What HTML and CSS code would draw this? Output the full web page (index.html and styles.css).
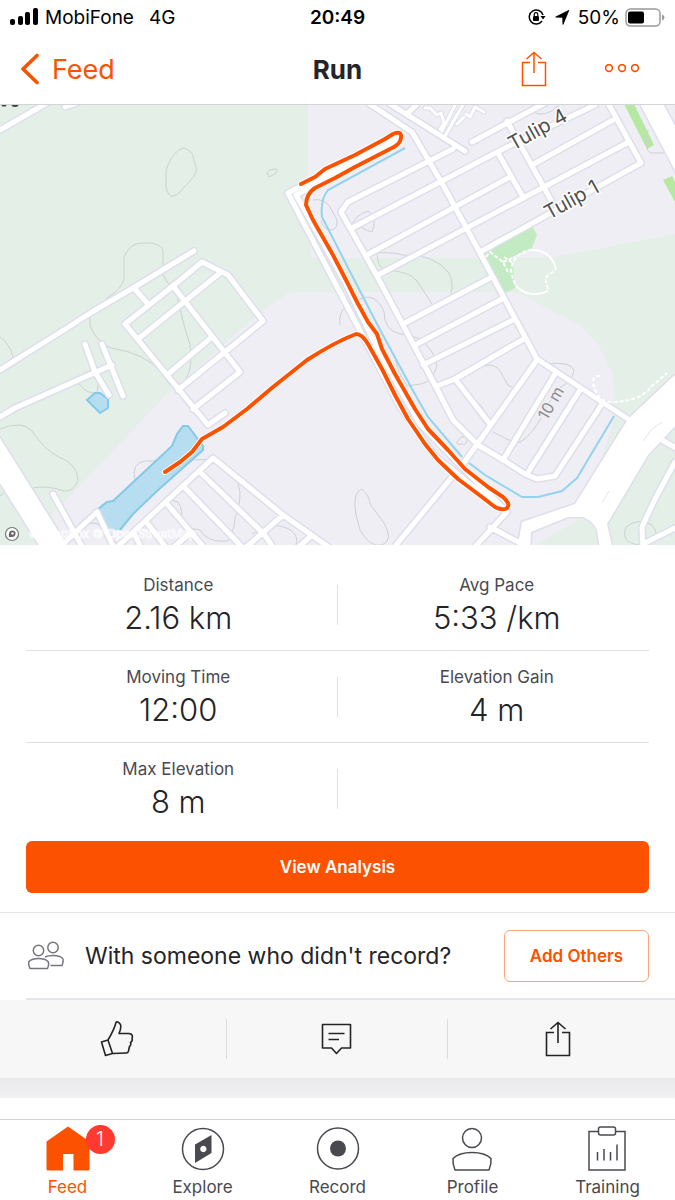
FILE: index.html
```html
<!DOCTYPE html>
<html lang="en">
  <head>
    <meta charset="UTF-8" />
    <meta name="viewport" content="width=device-width, initial-scale=1" />
    <title>Run</title>
    <link rel="stylesheet" href="styles.css">
  </head>
  <body>
    <!-- Phone status bar -->
    <div class="status-bar">
      <div class="status-left">
        <svg width="28" height="18" viewBox="0 0 28 18">
          <rect x="0" y="11" width="5" height="6" rx="2" />
          <rect x="8" y="8" width="5" height="9" rx="2" />
          <rect x="15" y="4" width="5" height="13" rx="2" />
          <rect x="23" y="0" width="5" height="17" rx="2" />
        </svg>
        <span>MobiFone</span>
        <span class="network">4G</span>
      </div>
      <div class="status-time">20:49</div>
      <div class="status-right">
        <svg width="18" height="16" viewBox="0 0 18 16">
          <path d="M14 12A7 7 0 1 1 15 6" fill="none" stroke="#000" stroke-width="1.500" />
          <path d="M12.500 7h5l-2.500 3.500z" />
          <rect x="5" y="7" width="6" height="5" rx="1" />
          <path d="M6.200 7V5.500a1.800 1.800 0 0 1 3.600 0V7" fill="none" stroke="#000" stroke-width="1.200" />
        </svg>
        <svg class="location" width="15" height="15" viewBox="0 0 15 15">
          <path d="M14.200.4 8.500 14.300q-.6 1-1 0L7.300 7.800.8 7.600q-1-.4 0-1L13.800 0q.6-.1.400.4z" />
        </svg>
        <span>50%</span>
        <svg width="40" height="19" viewBox="0 0 40 19">
          <rect x="1" y="1" width="34" height="17" rx="4.500" fill="none" stroke="#999" stroke-width="1.500" />
          <rect x="3" y="3.500" width="16" height="12" rx="2" />
          <path d="M37 6.500q2.500 1 2.500 3t-2.500 3z" fill="#999" />
        </svg>
      </div>
    </div>

    <header class="nav-bar">
      <a class="back" href="#feed">
        <svg width="20" height="32" viewBox="0 0 20 32">
          <path d="M17 2.500 3 16l14 13.500" fill="none" stroke="currentColor" stroke-width="3.600" stroke-linecap="round" stroke-linejoin="round" />
        </svg>
        Feed
      </a>
      <h1>Run</h1>
      <div class="nav-actions">
        <button class="icon-button" type="button" aria-label="Share">
          <svg width="26" height="36" viewBox="0 0 26 36">
            <path d="M9 11.500H1.500V34.500h23V11.500H17M13 22V1.500M5.500 8 13 1.500l7.500 6.500" fill="none" stroke="currentColor" stroke-width="1.500" />
          </svg>
        </button>
        <button class="icon-button" type="button" aria-label="More">
          <svg width="36" height="10" viewBox="0 0 36 10">
            <g fill="none" stroke="currentColor" stroke-width="1.600">
              <circle cx="5" cy="4" r="3.400" />
              <circle cx="18" cy="4" r="3.400" />
              <circle cx="31" cy="4" r="3.400" />
            </g>
          </svg>
        </button>
      </div>
    </header>

    <main>
      <div class="map">
        <svg class="map-canvas" viewBox="0 105 675 440" role="img" aria-label="Route map">
          <rect class="land" x="0" y="104" width="675" height="442" />

          <!-- Green areas -->
          <path class="green" d="M0 104H308V193L311 258H480L555 257 675 234V545H598L583 519 575 521 535 545 614 422 613 375 598 344 580 325 517 292H290L262 311 167 394 52 515 67 545H0z" />
          <path class="land" d="M614 422 613 375 540 360 480 500 517 545H535L580 519z" />
          <path class="green" d="M535 545 580 519 598 530V545z" />
          <path class="park" d="M533 227 537 235 532 248 512 257 515 288 503 294 482 253z" />
          <path class="grass" d="M624 104h10l20 41-7 4zM663 180l9-4 3 6v20z" />

          <!-- Contour lines -->
          <g class="contour">
            <path d="M184 148q-7 1-13 11t-5 17v11q2 10 7 9t7-4 10-11 6-14-3-11-9-8z" />
            <path d="M267 173q2-4 7-4 4 0 3 2l-2 3-6 3z" />
            <path d="M106 299Q124 287 124 278V257Q130 242 145 243H152Q163 246 163 251V275Q168 285 176 292L184 325 190 345Q193 366 187 377T176 382" />
            <path d="M90 312V326Q98 344 111 348 145 353 161 372L170 385" />
            <path d="M0 337Q10 344 13 357M0 429Q22 420 32 431 45 450 57 456 78 464 78 480 74 492 64 491 48 485 32 488M0 496 5 492" />
            <path d="M97 371Q80 370 78 382 84 393 95 393M99 378 97 393" />
            <path d="M135 480Q131 463 145 461H176L213 459Q238 471 240 492 240 508 235 517 235 530 228 541 207 543 200 530 187 528 180 525M135 480 141 497 125 520M159 512Q165 496 178 502 184 510 181 524" />
            <path d="M313 200Q324 198 330 207L337 220Q338 230 330 230 322 228 321 220" />
            <path d="M352 226Q354 216 368 211 378 218 372 232 365 230 361 227 354 232 352 226" />
            <path d="M377 253Q396 252 402 255 433 253 449 273 454 284 451 294M377 253Q377 268 387 270 411 272 417 281L432 304" />
            <path d="M340 325Q337 306 360 299 376 292 384 312 384 330 400 334L418 338Q435 350 437 366 432 382 421 384L407 386Q398 372 395 360" />
            <path d="M484 366Q495 363 500 371L508 385 513 388M547 364Q570 361 574 370 573 380 560 388L546 407 540 420Q525 444 515 443 505 438 493 432M474 402Q484 403 485 417M457 442q5-9 10-3 0 7-6 5-5 1-4-2" />
            <path d="M531 111Q545 120 560 104M648 130Q643 150 651 153H665M640 545Q620 543 626 527 638 517 652 525 660 535 653 540" />
            <path d="M362 489Q370 497 370 504L384 523Q394 540 382 545 370 548 360 530L356 515Q352 492 362 489M252 534Q267 525 279 526 300 530 296 545" />
            <path d="M86 526Q94 520 100 526" />
          </g>

          <!-- Water -->
          <path class="water" d="M95 393h5l8 6v9l-8 5-13-13z" />
          <path class="water-fill" d="M98 509 107 502 113 501 172 446 177 434 183 426H188L203 446V450L157 491 133 514 120 530 108 531z" />
          <path class="shore" d="M98 509 107 502 113 501 172 446 177 434 183 426H188L203 446V450L157 491 133 514 120 530" />

          <!-- Streets: one set drawn twice for the casing and the fill -->
          <defs>
            <g id="streets">
              <path d="M0 130 47 103M65 107 77 103" />
              <path d="M194 251 133 288 92 312 67 328 0 370M135 289 147 303" />
              <path d="M138 339 220 273M125 324 173 286 202 262 228 275 263 321 225 352 178 390M173 286 240 372 193 409" />
              <path d="M125 324 167 375 208 425 225 413M167 375 212 337" />
              <path d="M0 417 15 408 112 365M85 344 95 372 109 395M102 344 123 396" />
              <path d="M53 494 84 550M62 545 97 512 115 550" />
              <path d="M115 549 213 458 283 515 330 548M200 472 264 534 275 550M185 488 245 550M168 505 206 550M148 524 168 550M135 535 142 550M243 550 283 515M310 537 295 550M188 535 170 550" />
              <path d="M368 103 412 132 443 185 480 253 517 322 537 359 628 419" />
              <path d="M390 104 465 151M418 103 408 113M472 142 545 103M507 121 552 202" />
              <path d="M453 149 348 202 341 212 377 276 403 325 437 389 453 420 478 445 505 461 525 474 537 479 555 476 602 404" />
              <path d="M352 228 505 148 595 105M367 255 510 177M498 153 523 197M378 275 627 143M532 165 613 120M608 103 641 163 480 252" />
              <path d="M403 324 490 278M415 345 502 299M423 365 513 320M437 386 455 379 522 340M455 379 490 424" />
              <path d="M537 360 463 464M452 477 392 550M555 374 503 460M580 390 527 474" />
              <path d="M400 134 288 193 357 325 400 407 435 456 505 512M400 139 296 195 345 282 377 348 420 424 455 460 507 512 472 550M490 527 522 544" />
              <path d="M675 462 655 499 642 527 643 550M645 543 675 528M660 439 676 448" />
            </g>
            <g id="highways">
              <path d="M-5 430 70 550H42L-5 475z" />
              <path d="M638 100 680 180V135L661 100z" />
              <path d="M680 370 628 419 575 504 522 522 517 550H530L531 532 568 517H583Q594 522 597 530L600 550H613L607 524 648 455 680 421z" />
            </g>
            <g id="lanes">
              <path d="M464 103 445 136M456 103 442 131M425 108 430 108 437 115 441 113 444 123 440 129M464 117 457 124M466 114 470 117 475 107 484 112" />
            </g>
          </defs>
          <use class="casing" href="#streets" />
          <use class="highway-casing" href="#highways" />
          <use class="lane-casing" href="#lanes" />
          <use class="fill" href="#streets" />
          <use class="highway-fill" href="#highways" />
          <use class="lane-fill" href="#lanes" />
          <path class="ramp" d="M643 441 652 429 662 422M602 503 609 491" />

          <!-- Footpaths -->
          <path class="footpath" d="M532 250Q514 252 511 270 513 282 517 287M548 289 545 278 556 269M486 257 490 252 503 262 509 274M503 262 515 257M504 257 513 263" />
          <path class="footpath-solid" d="M517 287Q530 299 548 291M532 250Q551 250 556 269" />
          <path class="footpath" d="M600 376Q590 375 595 390 600 402 614 402 640 401 652 386L667 373" />

          <!-- Canals -->
          <path class="canal" d="M405 148 328 190Q320 200 322 217L377 324 412 389 428 417 462 457M469 463 485 475 522 497H538L562 491 577 478 614 416" />

          <!-- Recorded route -->
          <g id="route">
            <path class="route-casing" d="M301 184 315 177 325 169 355 155 385 139 393 134Q402 130 401 138 400 145 390 149L355 167 335 178 315 188Q306 194 306 205L313 220 333 255 347 282 357 302 368 322 377 334 382 349 395 374 415 409 428 429 448 450 465 469 488 487 503 497Q511 504 507 508 503 511 495 507L478 494 458 479 438 460 425 444 408 419 395 395 382 369 368 344Q362 334 356 334 335 342 307 360L273 387 247 409 223 427 202 439 192 452 180 462 165 472" />
            <path class="route-line" d="M301 184 315 177 325 169 355 155 385 139 393 134Q402 130 401 138 400 145 390 149L355 167 335 178 315 188Q306 194 306 205L313 220 333 255 347 282 357 302 368 322 377 334 382 349 395 374 415 409 428 429 448 450 465 469 488 487 503 497Q511 504 507 508 503 511 495 507L478 494 458 479 438 460 425 444 408 419 395 395 382 369 368 344Q362 334 356 334 335 342 307 360L273 387 247 409 223 427 202 439 192 452 180 462 165 472" />
          </g>

          <!-- Labels -->
          <text class="street-name" transform="translate(513 151) rotate(-29)">Tulip 4</text>
          <text class="street-name" transform="translate(549 220) rotate(-29)">Tulip 1</text>
          <text class="height-label" transform="translate(547 421) rotate(-60)">10 m</text>
          <path class="clipped-label" d="M2 105q2 1 4 0M12 105q3 2 6 0" />
          <text class="attribution" x="29" y="538">© Mapbox © OpenStreetMap</text>
          <circle cx="12" cy="534" r="6.500" fill="#fff" stroke="#777" stroke-width="1.200" />
          <path d="M9 537q-1-6 3-6.500 4 0 3.500 3.500-.5 3-3.500 3z" fill="#666" />
          <circle cx="12.500" cy="533.500" r="1.200" fill="#fff" />
        </svg>
      </div>

      <section class="summary">
        <dl class="stats">
          <div class="stat">
            <dt>Distance</dt>
            <dd>2.16 km</dd>
          </div>
          <div class="stat">
            <dt>Avg Pace</dt>
            <dd>5:33 /km</dd>
          </div>
          <div class="stat">
            <dt>Moving Time</dt>
            <dd>12:00</dd>
          </div>
          <div class="stat">
            <dt>Elevation Gain</dt>
            <dd>4 m</dd>
          </div>
          <div class="stat">
            <dt>Max Elevation</dt>
            <dd>8 m</dd>
          </div>
        </dl>
        <button class="analysis" type="button">View Analysis</button>
      </section>

      <section class="others">
        <svg width="36" height="30" viewBox="0 0 36 30">
          <g fill="none" stroke="#76747f" stroke-width="1.500">
            <circle cx="10.500" cy="9.500" r="5.200" />
            <circle cx="25" cy="6.500" r="5.200" />
            <path d="M2 27.500Q0 23 1 20.500 4 17.500 10.500 17.500T20 20.500Q21.500 23 19.500 27.500z" />
            <path d="M17 16Q20 14.500 25 14.500 33 14.500 35 18 35.500 21 34 24.500H22.500" />
          </g>
        </svg>
        <p>With someone who didn't record?</p>
        <button class="add-others" type="button">Add Others</button>
      </section>

      <div class="actions">
        <button class="icon-button" type="button" aria-label="Give kudos">
          <svg width="34" height="36" viewBox="0 0 34 36">
            <path d="M1.500 21 8 19 12.500 32.500 5.500 34.500zM8 19Q14 9 16 1.500 17.500-.5 20.500 3.500 21.500 7 19 12.500H29Q33.500 13 32 17.500 33 20 30.500 21.500 31.500 24 29.500 25.500L28.500 30Q28 32 26.500 32L12.500 32.500" fill="none" stroke="currentColor" stroke-width="1.600" stroke-linejoin="round" />
          </svg>
        </button>
        <button class="icon-button" type="button" aria-label="Comment">
          <svg width="31" height="32" viewBox="0 0 31 32">
            <path d="M2 1.500H29.500V25H20.500L15.500 30.500 10.500 25H1.500V1.500zM7.500 10.500H23.500M7.500 16.500H18" fill="none" stroke="currentColor" stroke-width="1.600" stroke-linejoin="round" />
          </svg>
        </button>
        <button class="icon-button" type="button" aria-label="Share">
          <svg width="26" height="36" viewBox="0 0 26 36">
            <path d="M9 11.500H1.500V34.500h23V11.500H17M13 22V1.500M5.500 8 13 1.500l7.500 6.500" fill="none" stroke="currentColor" stroke-width="1.600" />
          </svg>
        </button>
      </div>
      <div class="feed-gap"></div>
    </main>

    <nav class="tab-bar">
      <a class="tab active" href="#feed">
        <span class="tab-icon">
          <svg width="44" height="45" viewBox="0 0 44 45">
            <path d="M.5 15.500 22 .5 43.500 15.500V43Q43.500 44.500 42 44.500H27.500V28H17V44.500H2Q.5 44.500.5 43z" fill="currentColor" />
          </svg>
          <span class="badge">1</span>
        </span>
        Feed
      </a>
      <a class="tab" href="#explore">
        <span class="tab-icon">
          <svg width="44" height="45" viewBox="0 0 44 45">
            <circle cx="22" cy="23" r="20.500" fill="none" stroke="currentColor" stroke-width="1.500" />
            <path d="M14 18.500 30.500 9V27L14 37zM22.300 19.800a3.200 3.200 0 1 0 .1 0z" fill="currentColor" fill-rule="evenodd" />
          </svg>
        </span>
        Explore
      </a>
      <a class="tab" href="#record">
        <span class="tab-icon">
          <svg width="44" height="45" viewBox="0 0 44 45">
            <circle cx="22" cy="22.500" r="20.500" fill="none" stroke="currentColor" stroke-width="1.500" />
            <circle cx="22" cy="22.500" r="8" fill="currentColor" />
          </svg>
        </span>
        Record
      </a>
      <a class="tab" href="#profile">
        <span class="tab-icon">
          <svg width="44" height="45" viewBox="1 0 44 45">
            <circle cx="22" cy="12" r="9.500" fill="none" stroke="currentColor" stroke-width="1.500" />
            <path d="M5 44Q2.500 38 3 32.500 9 26.500 22 26.500T41 32.500Q41.500 38 39 44z" fill="none" stroke="currentColor" stroke-width="1.500" stroke-linejoin="round" />
          </svg>
        </span>
        Profile
      </a>
      <a class="tab" href="#training">
        <span class="tab-icon">
          <svg width="44" height="45" viewBox="1 0 44 45">
            <g fill="none" stroke="currentColor" stroke-width="1.500">
              <path d="M13.500 5.500H4V44H40V5.500H30.500" />
              <rect x="13.500" y="1" width="17" height="8" rx="2" />
              <path d="M12.500 26V34.500M19 23V34.500M25.500 26V34.500M32 18.500V34.500" />
            </g>
          </svg>
        </span>
        Training
      </a>
    </nav>
  </body>
</html>
```
FILE: styles.css
```css
* {
  box-sizing: border-box;
}
body {
  margin: 0;
  min-height: 100vh;
  display: flex;
  flex-direction: column;
  font-family: Inter, "Liberation Sans", sans-serif;
  color: #242428;
  background: #fff;
}
svg {
  display: block;
  flex: none;
}
a {
  color: inherit;
  text-decoration: none;
}
button {
  font: inherit;
  cursor: pointer;
}
.icon-button {
  display: flex;
  align-items: center;
  justify-content: center;
  padding: 0;
  border: 0;
  background: none;
  color: inherit;
}

/* Status bar */
.status-bar {
  display: grid;
  grid-template-columns: 1fr auto 1fr;
  align-items: center;
  height: 34px;
  padding: 0 10px;
  font-size: 19px;
  color: #000;
}
.status-left,
.status-right {
  display: flex;
  align-items: center;
}
.status-left {
  gap: 7px;
}
.network {
  margin-left: 8px;
}
.status-time {
  font-weight: 600;
}
.status-right {
  justify-content: flex-end;
  gap: 5px;
}
.location {
  margin: 0 3px 0 4px;
}

/* Navigation */
.nav-bar {
  display: grid;
  grid-template-columns: 1fr auto 1fr;
  align-items: center;
  height: 71px;
  padding: 0 20px;
  border-bottom: 1px solid #d4d4d8;
}
.back {
  display: flex;
  align-items: center;
  gap: 12px;
  font-size: 27px;
  color: #fc5200;
}
h1 {
  margin: 0;
  font-size: 26px;
  font-weight: 700;
}
.nav-actions {
  display: flex;
  align-items: center;
  justify-content: flex-end;
  gap: 57px;
  padding-right: 15px;
  color: #fc5200;
}

/* Map */
.map-canvas {
  width: 100%;
  height: auto;
}
.land {
  fill: #efeef5;
}
.green {
  fill: #e4efe7;
}
.park {
  fill: #c3ebc3;
}
.grass {
  fill: #b5e8a0;
}
.contour {
  fill: none;
  stroke: #cdd1d1;
  stroke-width: 1;
}
.water {
  fill: #b6ddf0;
  stroke: #85c8e8;
  stroke-width: 2;
}
.water-fill {
  fill: #b6ddf0;
}
.shore {
  fill: none;
  stroke: #85c8e8;
  stroke-width: 2;
}
.casing,
.fill,
.lane-casing,
.lane-fill {
  fill: none;
  stroke-linecap: round;
  stroke-linejoin: round;
}
.casing {
  stroke: #dddfec;
  stroke-width: 8;
}
.fill {
  stroke: #fff;
  stroke-width: 5;
}
.lane-casing {
  stroke: #dddfec;
  stroke-width: 5;
}
.lane-fill {
  stroke: #fff;
  stroke-width: 3;
}
.highway-casing {
  fill: #dddfec;
  stroke: #dddfec;
  stroke-width: 3;
}
.highway-fill {
  fill: #fff;
}
.ramp {
  fill: none;
  stroke: #e4e4ec;
}
.footpath,
.footpath-solid {
  fill: none;
  stroke: #fff;
  stroke-width: 2;
}
.footpath {
  stroke-dasharray: 4 2;
}
.canal {
  fill: none;
  stroke: #93d3ee;
  stroke-width: 2;
}
.route-casing,
.route-line {
  fill: none;
  stroke-linecap: round;
  stroke-linejoin: round;
}
.route-casing {
  stroke: #fff;
  stroke-width: 6;
}
.route-line {
  stroke: #fc5200;
  stroke-width: 4;
}
.street-name,
.height-label {
  font-size: 20px;
  fill: #505050;
  stroke: #fff;
  stroke-width: 3;
  paint-order: stroke;
}
.height-label {
  font-size: 16px;
  fill: #8c8c8c;
  stroke: #efeef5;
}
.clipped-label {
  fill: none;
  stroke: #444;
  stroke-width: 2;
}
.attribution {
  font-size: 12px;
  fill: #fff;
  stroke: #fff;
  stroke-width: 1;
  opacity: 0.7;
}

/* Stats */
.summary {
  padding: 14px 26px 19px;
  border-bottom: 1px solid #e4e4e9;
}
.stats {
  display: grid;
  grid-template-columns: 1fr 1fr;
  margin: 0;
}
.stat {
  position: relative;
  height: 92px;
  padding-top: 15px;
  text-align: center;
  border-bottom: 1px solid #dfdfe8;
}
.stat:nth-child(odd) {
  padding-right: 7px;
}
.stat:nth-child(even) {
  padding-left: 7px;
}
.stat:last-child {
  border-bottom: 0;
}
.stat:nth-child(odd)::after {
  content: "";
  position: absolute;
  top: 26px;
  right: 0;
  width: 1px;
  height: 40px;
  background: #dfdfe8;
}
dt {
  font-size: 17px;
  line-height: 22px;
  color: #494950;
}
dd {
  margin: 4px 0 0;
  font-size: 31px;
  font-weight: 300;
  line-height: 36px;
}
.analysis {
  display: block;
  width: 100%;
  height: 52px;
  margin-top: 6px;
  border: 0;
  border-radius: 6px;
  background: #fc5200;
  color: #fff;
  font-size: 17px;
  font-weight: 600;
}

/* Tag other athletes */
.others {
  display: flex;
  align-items: center;
  height: 87px;
  margin-left: 26px;
  padding: 0 26px 0 2px;
  border-bottom: 2px solid #e4e4ec;
}
.others p {
  flex: 1;
  margin: 0 0 0 21px;
  font-size: 23px;
}
.add-others {
  width: 145px;
  height: 52px;
  padding: 0;
  border: 1px solid #fda67c;
  border-radius: 6px;
  background: #fff;
  color: #fc5200;
  font-size: 17px;
  font-weight: 600;
}

/* Kudos, comment, share */
.actions {
  display: grid;
  grid-template-columns: repeat(3, 1fr);
  align-items: center;
  height: 78px;
  padding: 0 7px;
  background: #f7f7f7;
}
.actions .icon-button {
  height: 40px;
  border-right: 1px solid #dcdce0;
}
.actions .icon-button:last-child {
  border-right: 0;
}
.feed-gap {
  height: 20px;
  background: linear-gradient(#e9e9eb, #f1f1f3);
}

/* Tabs */
.tab-bar {
  display: grid;
  grid-template-columns: repeat(5, 1fr);
  height: 81px;
  margin-top: auto;
  padding-top: 6px;
  border-top: 1px solid #d0d4d4;
}
.tab {
  display: flex;
  flex-direction: column;
  align-items: center;
  gap: 5px;
  font-size: 17px;
  line-height: 22px;
  color: #494950;
}
.active {
  color: #fc5200;
}
.tab-icon {
  position: relative;
}
.badge {
  position: absolute;
  top: -1px;
  left: 40px;
  width: 29px;
  height: 29px;
  border-radius: 50%;
  background: #ff3b30;
  color: #fff;
  font-size: 20px;
  font-weight: 300;
  line-height: 29px;
  text-align: center;
}
```
